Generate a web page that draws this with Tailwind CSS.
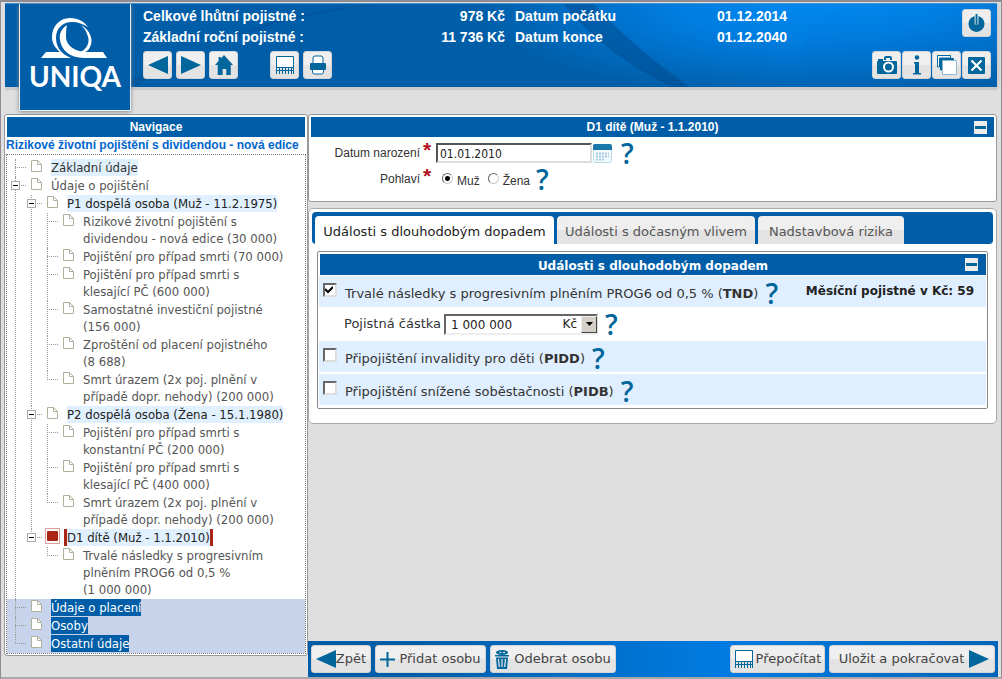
<!DOCTYPE html>
<html lang="cs">
<head>
<meta charset="utf-8">
<meta name="viewport" content="width=device-width, initial-scale=1">
<title>UNIQA – Události s dlouhodobým dopadem</title>
<script src="https://cdn.jsdelivr.net/npm/@tailwindcss/browser@4"></script>
</head>
<body class="min-h-screen flex flex-col bg-[#dfdfdf] border border-[#8e8b92] border-t-2 border-b-2 border-b-[#a8a8a8] font-['Liberation_Sans',sans-serif] text-[#333]">

<svg class="hidden" aria-hidden="true">
  <symbol id="doc" viewBox="0 0 11 12"><path d="M.5.5h6l4 4v7H.5z" fill="#fff" stroke="#b0b09c"/><path d="M6.500.5v4h4" fill="none" stroke="#b0b09c"/></symbol>
  <symbol id="calc" viewBox="0 0 20 20"><path d="M1.500 1.500h17v11h-17z" fill="#fff" stroke="#00669b"/><path d="M1 12h1v7H1zM4 13h1v6H4zM7 13h1v6H7zM10 13h1v6h-1zM13 13h1v6h-1zM16 13h1v6h-1zM18 12h1v7h-1zM1 15h18v1H1z" fill="#00669b"/></symbol>
  <symbol id="left" viewBox="0 0 20 18"><path d="M0 9 20 0v18z" fill="#00669b"/></symbol>
  <symbol id="right" viewBox="0 0 20 18"><path d="M20 9 0 0v18z" fill="#00669b"/></symbol>
</svg>

<header class="relative mx-1 mt-px h-[84px] pl-[14px] pr-[6px] flex items-start text-white border-t border-[#3d8fd0] shadow-[0_3px_1px_#c9c9cb,3px_1px_2px_#cfcfd2] bg-[#005ea8]">
  <svg class="absolute inset-0 w-full h-full" viewBox="0 0 991 84" preserveAspectRatio="none" aria-hidden="true">
    <defs>
      <linearGradient id="fall" x1="0" y1="0" x2="0" y2="1"><stop offset="0" stop-color="#0088f0"/><stop offset=".4" stop-color="#0077d8"/><stop offset="1" stop-color="#0062b0"/></linearGradient>
      <radialGradient id="glow" gradientUnits="userSpaceOnUse" cx="0" cy="0" r="1" gradientTransform="translate(800 0) scale(330 95)"><stop offset="0" stop-color="#0088f0"/><stop offset=".4" stop-color="#007de0"/><stop offset="1" stop-color="#005ea8"/></radialGradient>
    </defs>
    <path d="M470 0h521v84H470z" fill="url(#glow)"/>
    <path d="M800 0h191v84H800z" fill="url(#fall)" opacity=".35"/>
    <path d="M558 0h30Q628 44 684 84h-18Q600 52 558 0z" fill="#004a8c" opacity=".5"/>
    <path d="M130 84Q250 0 400 0h-18Q260 10 110 84z" fill="#004a8c" opacity=".3"/>
  </svg>

  <a href="#" aria-label="UNIQA" class="relative shrink-0 w-[112px] h-[107px] bg-[#005ea8] border border-t-0 border-[#e4eef6] shadow-[0_1px_4px_#888] flex flex-col items-center pt-3">
    <svg class="w-[68px] h-[44px]" viewBox="0 0 68 44" fill="#fff" aria-hidden="true">
      <path d="M47 11C43 5 36 2 29 2 18 2 11 11 11 21c0 6 3 11 8 15H5l-5 6h30C20 38 15 31 15 22 15 12 22 6 31 6c6 0 11 2 16 5z"/>
      <path d="M26 9C20 13 18 18 19 24c1 9 9 18 24 18h23l-4-6H47C34 36 26 30 25 22c0-5 0-9 1-13z"/>
      <path d="M40 9c9 5 13 15 9 22-1 3-4 5-7 6h-5c9-3 13-11 9-19-1-4-4-7-6-9z"/>
    </svg>
    <span class="font-['Lato',sans-serif] font-bold text-[28px] leading-8">UNIQA</span>
  </a>

  <div class="relative ml-3 flex-1">
    <dl class="pt-[2px] grid grid-cols-[232px_130px_192px_auto] items-center font-bold text-[14px] leading-[21px] whitespace-nowrap">
      <dt>Celkové lhůtní pojistné :</dt><dd class="text-right">978 Kč</dd>
      <dt class="pl-[10px]">Datum počátku</dt><dd class="pl-[20px]">01.12.2014</dd>
      <dt>Základní roční pojistné :</dt><dd class="text-right">11 736 Kč</dd>
      <dt class="pl-[10px]">Datum konce</dt><dd class="pl-[20px]">01.12.2040</dd>
    </dl>
    <div class="mt-[3px] flex gap-1 [&>button]:w-[29px] [&>button]:h-7 [&>button]:rounded-[3px] [&>button]:border [&>button]:border-[#d4d4d4] [&>button]:bg-linear-to-b [&>button]:from-[#efefef] [&>button]:from-50% [&>button]:to-[#e3e3e3] [&>button]:to-50% [&>button]:flex [&>button]:items-center [&>button]:justify-center">
      <button aria-label="Zpět"><svg class="w-5 h-[18px]"><use href="#left"/></svg></button>
      <button aria-label="Vpřed"><svg class="w-5 h-[18px]"><use href="#right"/></svg></button>
      <button aria-label="Domů"><svg class="w-[18px] h-5" viewBox="0 0 20 20" preserveAspectRatio="none"><path d="M10 0 20 10h-2.500v10h-5v-6h-4v6H3V10H0L4 6V2h2.500v1.500z" fill="#00669b"/></svg></button>
      <button aria-label="Přepočítat" class="ml-7"><svg class="w-5 h-5"><use href="#calc"/></svg></button>
      <button aria-label="Tisk"><svg class="w-4 h-5" viewBox="0 0 16 20"><path d="M3 8V3q0-2 2-2h6q2 0 2 2v5M2.500 14v3q0 2 2 2h7q2 0 2-2v-3" fill="#fff" stroke="#00669b"/><rect y="8" width="16" height="7" rx="1" fill="#00669b"/></svg></button>
    </div>
  </div>

  <div class="relative pt-[5px] flex flex-col items-end gap-[14px] [&_button]:w-[29px] [&_button]:h-7 [&_button]:rounded-[3px] [&_button]:border [&_button]:border-[#d4d4d4] [&_button]:bg-linear-to-b [&_button]:from-[#efefef] [&_button]:from-50% [&_button]:to-[#e3e3e3] [&_button]:to-50% [&_button]:flex [&_button]:items-center [&_button]:justify-center">
    <button aria-label="Odhlásit"><svg class="w-[17px] h-[18px]" viewBox="0 0 18 19"><circle cx="9" cy="10.500" r="8.500" fill="#00669b"/><path d="M9 1v10" stroke="#efefef" stroke-width="4"/><path d="M9 0v11" stroke="#00669b" stroke-width="2"/></svg></button>
    <div class="flex gap-px">
      <button aria-label="Snímek"><svg class="w-5 h-[18px]" viewBox="0 0 20 18"><path d="M8 4V2q0-1 1-1h4q1 0 1 1v2" fill="none" stroke="#00669b" stroke-width="2"/><rect y="5" width="20" height="13" rx="1" fill="#00669b"/><path d="M1 3h5v3H1z" fill="#00669b"/><circle cx="11.500" cy="11" r="4.500" fill="#00669b" stroke="#fff" stroke-width="2"/></svg></button>
      <button aria-label="Informace"><svg class="w-2 h-5" viewBox="0 0 8 20" fill="#00669b"><circle cx="4" cy="2.500" r="2.300"/><path d="M1 7h5v11h2v1.500H0V18h2V8.500H1z"/></svg></button>
      <button aria-label="Okna"><svg class="w-5 h-5" viewBox="0 0 20 20" fill="#fff" stroke="#00669b"><path d="M.5 12V.5h13V3h-11v9z"/><path d="M3.500 15V3.500h13V6h-11v9z" fill="#00669b"/><path d="M5.500 5.500h14v14h-14z" stroke="#8fb9d0"/></svg></button>
      <button aria-label="Zavřít"><svg class="w-[17px] h-[17px]" viewBox="0 0 17 17"><rect width="17" height="17" rx="1" fill="#00669b"/><path d="m3.500 3.500 10 10m0-10-10 10" stroke="#fff" stroke-width="2.200"/></svg></button>
    </div>
  </div>
</header>

<main class="mt-[27px] flex-1 flex items-start">
  <nav class="w-[304px] shrink-0 ml-[3px] bg-white border border-[#999] rounded-[3px]" aria-label="Navigace">
    <h2 class="mx-[2px] mt-[2px] h-5 bg-[#005ea8] text-white text-center font-bold text-[12px] leading-5">Navigace</h2>
    <p class="pl-px font-bold text-[12px] leading-[17px] text-[#0066cc] whitespace-nowrap">Rizikové životní pojištění s dividendou - nová edice</p>
    <div class="m-px mt-0 border border-dotted border-[#777] pt-[4px] font-['DejaVu_Sans_Condensed','DejaVu_Sans',sans-serif] font-[stretch:condensed] text-[13px] leading-[17px] whitespace-nowrap text-[#555]
      [&_ul_ul]:ml-4
      [&_li]:relative [&_li]:before:absolute [&_li]:before:left-2 [&_li]:before:top-0 [&_li]:before:h-full [&_li]:before:border-l [&_li]:before:border-dotted [&_li]:before:border-[#999]
      [&_li]:last:before:h-[9px]
      [&_li]:after:absolute [&_li]:after:left-2 [&_li]:after:top-2 [&_li]:after:w-[11px] [&_li]:after:border-t [&_li]:after:border-dotted [&_li]:after:border-[#999]
      [&_div]:flex [&_div]:gap-[9px] [&_div]:pl-6 [&_div]:pb-px
      [&_div>svg]:w-[11px] [&_div>svg]:h-3 [&_div>svg]:mt-px [&_div>svg]:shrink-0
      [&_button]:absolute [&_button]:z-10 [&_button]:left-1 [&_button]:top-1 [&_button]:w-[9px] [&_button]:h-[9px] [&_button]:bg-white [&_button]:border [&_button]:border-[#aaa] [&_button]:before:absolute [&_button]:before:left-px [&_button]:before:top-[3px] [&_button]:before:w-[5px] [&_button]:before:h-px [&_button]:before:bg-black">
      <ul>
        <li><div><svg><use href="#doc"/></svg><a href="#" class="bg-[#e0f0ff] text-[#333]">Základní údaje</a></div></li>
        <li><button aria-label="Sbalit"></button><div><svg><use href="#doc"/></svg><a href="#">Údaje o pojištění</a></div>
          <ul>
            <li><button aria-label="Sbalit"></button><div><svg><use href="#doc"/></svg><a href="#" class="bg-[#e0f0ff] text-[#222]">P1 dospělá osoba (Muž - 11.2.1975)</a></div>
              <ul>
                <li><div><svg><use href="#doc"/></svg><a href="#">Rizikové životní pojištění s<br>dividendou - nová edice (30 000)</a></div></li>
                <li><div><svg><use href="#doc"/></svg><a href="#">Pojištění pro případ smrti (70 000)</a></div></li>
                <li><div><svg><use href="#doc"/></svg><a href="#">Pojištění pro případ smrti s<br>klesající PČ (600 000)</a></div></li>
                <li><div><svg><use href="#doc"/></svg><a href="#">Samostatné investiční pojistné<br>(156 000)</a></div></li>
                <li><div><svg><use href="#doc"/></svg><a href="#">Zproštění od placení pojistného<br>(8 688)</a></div></li>
                <li><div><svg><use href="#doc"/></svg><a href="#">Smrt úrazem (2x poj. plnění v<br>případě dopr. nehody) (200 000)</a></div></li>
              </ul>
            </li>
            <li><button aria-label="Sbalit"></button><div><svg><use href="#doc"/></svg><a href="#" class="bg-[#e0f0ff] text-[#222]">P2 dospělá osoba (Žena - 15.1.1980)</a></div>
              <ul>
                <li><div><svg><use href="#doc"/></svg><a href="#">Pojištění pro případ smrti s<br>konstantní PČ (200 000)</a></div></li>
                <li><div><svg><use href="#doc"/></svg><a href="#">Pojištění pro případ smrti s<br>klesající PČ (400 000)</a></div></li>
                <li><div><svg><use href="#doc"/></svg><a href="#">Smrt úrazem (2x poj. plnění v<br>případě dopr. nehody) (200 000)</a></div></li>
              </ul>
            </li>
            <li><button aria-label="Sbalit"></button><div><svg viewBox="0 0 11 12" class="outline outline-[#dca09a] outline-offset-1"><rect y="1" width="11" height="10" rx="1" fill="#aa2515"/></svg><a href="#" class="-mx-[3px] border-x-[3px] border-[#aa2515] bg-[#e0f0ff] text-[#222]">D1 dítě (Muž - 1.1.2010)</a></div>
              <ul>
                <li><div><svg><use href="#doc"/></svg><a href="#">Trvalé následky s progresivním<br>plněním PROG6 od 0,5 %<br>(1 000 000)</a></div></li>
              </ul>
            </li>
          </ul>
        </li>
        <li class="bg-[#c8d3ec]"><div><svg><use href="#doc"/></svg><a href="#" class="bg-[#005ea8] text-white">Údaje o placení</a></div></li>
        <li class="bg-[#c8d3ec]"><div><svg><use href="#doc"/></svg><a href="#" class="bg-[#005ea8] text-white">Osoby</a></div></li>
        <li class="bg-[#c8d3ec]"><div><svg><use href="#doc"/></svg><a href="#" class="bg-[#005ea8] text-white">Ostatní údaje</a></div></li>
      </ul>
    </div>
  </nav>

  <div class="flex-1 self-stretch flex flex-col pr-[3px]">
    <section class="mr-px h-[88px] bg-white border border-[#999] rounded-[3px]">
      <h2 class="relative mx-[2px] mt-[2px] h-5 bg-[#005ea8] text-white text-center font-bold text-[12px] leading-5">D1 dítě (Muž - 1.1.2010)
        <button aria-label="Sbalit" class="absolute right-[7px] top-1 w-[13px] h-[13px] bg-[#eee] flex items-center justify-center"><span class="w-[11px] h-[3px] bg-[#00669b]"></span></button>
      </h2>
      <form class="pt-[3px] text-[12px]">
        <div class="flex h-[26px] items-center">
          <label for="birth" class="w-[111px] text-right">Datum narození</label>
          <span class="w-4 pl-[3px] self-start h-6 font-bold text-[21px] leading-5 text-[#b01020]">*</span>
          <input id="birth" value="01.01.2010" class="w-[156px] h-5 px-[2px] pt-px font-['DejaVu_Sans_Condensed',sans-serif] font-[stretch:condensed] text-[12px] text-[#222] bg-white border-2 border-[#555] border-r-[#ddd] border-b-[#ddd]">
          <button type="button" aria-label="Kalendář" class="ml-px"><svg class="w-[19px] h-[19px]" viewBox="0 0 19 19"><rect x=".5" y=".5" width="18" height="18" rx="2" fill="#f4fafd" stroke="#b8d8e8"/><path d="M0 2q0-2 2-2h15q2 0 2 2v4H0z" fill="#1878aa"/><path d="M3 9.500h13M3 12.500h13M3 15.500h8" stroke="#a5cbe2" stroke-width="2" stroke-dasharray="2 1"/></svg></button>
          <button type="button" aria-label="Nápověda" class="ml-[9px] font-['Open_Sans',sans-serif] font-semibold text-[28px] leading-6 text-[#00669b]">?</button>
        </div>
        <div class="flex h-[25px] items-center">
          <span class="w-[111px] text-right">Pohlaví</span>
          <span class="w-[22px] pl-[3px] self-start h-6 font-bold text-[21px] leading-5 text-[#b01020]">*</span>
          <label class="flex items-center gap-1 pt-1"><input type="radio" name="sex" checked class="appearance-none w-[11px] h-[11px] mb-1 rounded-full border border-[#666] border-r-[#ccc] border-b-[#ccc] bg-white checked:bg-[radial-gradient(circle,#000_2px,#fff_3px)]">Muž</label>
          <label class="ml-2 flex items-center gap-1 pt-1"><input type="radio" name="sex" class="appearance-none w-[11px] h-[11px] mb-1 rounded-full border border-[#666] border-r-[#ccc] border-b-[#ccc] bg-white checked:bg-[radial-gradient(circle,#000_2px,#fff_3px)]">Žena</label>
          <button type="button" aria-label="Nápověda" class="ml-[6px] font-['Open_Sans',sans-serif] font-semibold text-[28px] leading-6 text-[#00669b]">?</button>
        </div>
      </form>
    </section>

    <section class="mr-px mt-[6px] h-[216px] px-[3px] pt-[3px] bg-white border border-[#aaa] rounded-[5px] font-['DejaVu_Sans',sans-serif] text-[13px]">
      <div role="tablist" class="h-8 pt-1 pl-[3px] flex gap-[3px] bg-[#005ea8] rounded-[4px] text-[#555] [&>button]:rounded-t-[4px] [&>button]:pt-[3px] [&>button]:whitespace-nowrap">
        <button role="tab" aria-selected="true" class="w-[239px] bg-white text-[#222]">Události s dlouhodobým dopadem</button>
        <button role="tab" class="w-[198px] bg-linear-to-b from-[#efefef] from-50% to-[#e3e3e3] to-50%">Události s dočasným vlivem</button>
        <button role="tab" class="w-[146px] bg-linear-to-b from-[#efefef] from-50% to-[#e3e3e3] to-50%">Nadstavbová rizika</button>
      </div>
      <div class="mt-[7px] ml-[5px] mr-[5px] h-[158px] p-px pt-[2px] border border-[#888] rounded-[2px]">
        <h3 class="relative ml-px h-[21px] bg-[#005ea8] text-white text-center font-bold text-[12px] leading-6">Události s dlouhodobým dopadem
          <button aria-label="Sbalit" class="absolute right-[8px] top-1 w-[13px] h-[13px] bg-[#eee] flex items-center justify-center"><span class="w-[11px] h-[3px] bg-[#00669b]"></span></button>
        </h3>
        <div class="mt-px h-[31px] bg-[#e0efff] flex pl-1 pr-3 pt-[7px]">
          <input id="tnd" type="checkbox" checked class="peer appearance-none w-[14px] h-[14px] mr-2 bg-white border-2 border-[#666] border-r-[#ddd] border-b-[#ddd]">
          <svg class="invisible peer-checked:visible -ml-5 mr-[12px] mt-[3px] w-2 h-2 pointer-events-none relative shrink-0" viewBox="0 0 8 8"><path d="m0 3 3 3 5-5" fill="none" stroke="#000" stroke-width="2"/></svg>
          <label for="tnd" class="leading-[21px]">Trvalé následky s progresivním plněním PROG6 od 0,5 % (<b>TND</b>)</label>
          <button aria-label="Nápověda" class="ml-[7px] h-[21px] font-['Open_Sans',sans-serif] font-semibold text-[28px] leading-[21px] text-[#00669b]">?</button>
          <b class="ml-auto text-[12px] leading-4 text-[#222]">Měsíční pojistné v Kč: 59</b>
        </div>
        <div class="h-[34px] flex items-center pl-[25px]">
          <label for="amount">Pojistná částka</label>
          <span class="relative ml-[3px]">
            <select id="amount" class="appearance-none block w-[154px] h-[21px] pl-[5px] text-[12px] leading-[19px] bg-white border-2 border-[#666] border-r-[#ddd] border-b-[#eee] text-[#222]"><option>1 000 000</option></select>
            <span class="absolute right-[21px] top-0 text-[12px] leading-5 text-[#222] pointer-events-none">Kč</span>
            <span class="absolute right-px top-[2px] w-4 h-[17px] bg-[#d4d0c8] border border-[#eee] border-r-[#444] border-b-[#444] flex items-center justify-center pointer-events-none"><svg class="w-[7px] h-1" viewBox="0 0 7 4"><path d="M0 0h7L3.500 4z"/></svg></span>
          </span>
          <button aria-label="Nápověda" class="ml-[7px] font-['Open_Sans',sans-serif] font-semibold text-[28px] leading-6 text-[#00669b]">?</button>
        </div>
        <div class="h-[31px] bg-[#e0efff] flex pl-1 pt-[7px]">
          <input id="pidd" type="checkbox" class="appearance-none w-[14px] h-[14px] mr-2 bg-white border-2 border-[#666] border-r-[#ddd] border-b-[#ddd] checked:bg-black">
          <label for="pidd" class="leading-[21px]">Připojištění invalidity pro děti (<b>PIDD</b>)</label>
          <button aria-label="Nápověda" class="ml-[7px] h-[21px] font-['Open_Sans',sans-serif] font-semibold text-[28px] leading-[21px] text-[#00669b]">?</button>
        </div>
        <div class="mt-[2px] h-[31px] bg-[#e0efff] flex pl-1 pt-[7px]">
          <input id="pidb" type="checkbox" class="appearance-none w-[14px] h-[14px] mr-2 bg-white border-2 border-[#666] border-r-[#ddd] border-b-[#ddd] checked:bg-black">
          <label for="pidb" class="leading-[21px]">Připojištění snížené soběstačnosti (<b>PIDB</b>)</label>
          <button aria-label="Nápověda" class="ml-[7px] h-[21px] font-['Open_Sans',sans-serif] font-semibold text-[28px] leading-[21px] text-[#00669b]">?</button>
        </div>
      </div>
    </section>

    <footer class="mt-auto h-9 flex items-start gap-1 pt-1 px-[3px] bg-linear-to-r from-[#005ea8] from-15% via-[#007be2] via-60% to-[#0066ba] font-['DejaVu_Sans',sans-serif] text-[13px] text-[#444] [&>button]:h-7 [&>button]:rounded-[3px] [&>button]:border [&>button]:border-[#d4d4d4] [&>button]:bg-linear-to-b [&>button]:from-[#efefef] [&>button]:from-50% [&>button]:to-[#e3e3e3] [&>button]:to-50% [&>button]:flex [&>button]:items-center [&>button]:justify-center [&>button]:whitespace-nowrap">
      <button class="w-[60px]"><svg class="w-5 h-[18px]"><use href="#left"/></svg>Zpět</button>
      <button class="w-[111px] gap-1"><svg class="w-[15px] h-[15px]" viewBox="0 0 15 15"><path d="M7.500 0v15M0 7.500h15" stroke="#00669b" stroke-width="2"/></svg>Přidat osobu</button>
      <button class="w-[126px] gap-[5px]"><svg class="w-[14px] h-[19px]" viewBox="0 0 14 19"><ellipse cx="7" cy="2.500" rx="6" ry="2.500" fill="#00669b"/><path d="M4.500 2.500h2M8 2.500h2" stroke="#efefef"/><path d="M0 5h14v1.500H0zM1 7.500h12L12 19H2z" fill="#00669b"/><path d="m3.500 9 .8 8M7 9v8M10.500 9l-.8 8" stroke="#efefef" stroke-width="1.200"/></svg>Odebrat osobu</button>
      <button class="ml-auto w-[95px] gap-[2px]"><svg class="w-5 h-5"><use href="#calc"/></svg>Přepočítat</button>
      <button class="w-[166px] gap-[5px] pl-1"><span>Uložit a pokračovat</span><svg class="w-5 h-[18px]"><use href="#right"/></svg></button>
    </footer>
  </div>
</main>
</body>
</html>
